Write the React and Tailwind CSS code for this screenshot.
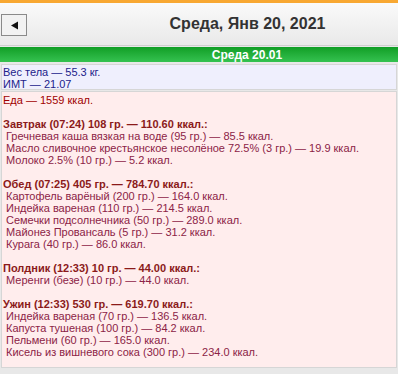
export default function App() {
  const meals = [
    {
      title: 'Завтрак (07:24) 108 гр. — 110.60 ккал.:',
      items: [
        'Гречневая каша вязкая на воде (95 гр.) — 85.5 ккал.',
        'Масло сливочное крестьянское несолёное 72.5% (3 гр.) — 19.9 ккал.',
        'Молоко 2.5% (10 гр.) — 5.2 ккал.',
      ],
    },
    {
      title: 'Обед (07:25) 405 гр. — 784.70 ккал.:',
      items: [
        'Картофель варёный (200 гр.) — 164.0 ккал.',
        'Индейка вареная (110 гр.) — 214.5 ккал.',
        'Семечки подсолнечника (50 гр.) — 289.0 ккал.',
        'Майонез Провансаль (5 гр.) — 31.2 ккал.',
        'Курага (40 гр.) — 86.0 ккал.',
      ],
    },
    {
      title: 'Полдник (12:33) 10 гр. — 44.00 ккал.:',
      items: ['Меренги (безе) (10 гр.) — 44.0 ккал.'],
    },
    {
      title: 'Ужин (12:33) 530 гр. — 619.70 ккал.:',
      items: [
        'Индейка вареная (70 гр.) — 136.5 ккал.',
        'Капуста тушеная (100 гр.) — 84.2 ккал.',
        'Пельмени (60 гр.) — 165.0 ккал.',
        'Кисель из вишневого сока (300 гр.) — 234.0 ккал.',
      ],
    },
  ]

  return (
    <div className="w-[398px] h-[374px] overflow-hidden bg-[#e8e8e8] font-['Liberation_Sans',sans-serif]">
      <div className="h-[3px] bg-[#f8a832]" />

      {/* Header */}
      <div className="h-[43px] flex items-center bg-gradient-to-b from-[#fafafa] to-[#e9e9e9] border-b border-[#cfcfcf]">
        <button className="ml-[1px] mt-[2px] w-[26px] h-[22px] border border-[#8a8a8a] bg-[#f2f2f2] flex items-center justify-center">
          <svg width="9" height="9" viewBox="0 0 9 9">
            <path d="M1 4.5 L8 0.5 L8 8.5 Z" fill="#111" />
          </svg>
        </button>
        <div className="flex-1 text-center pl-[70px] text-[16px] font-bold text-[#333]">
          Среда, Янв 20, 2021
        </div>
      </div>

      {/* Day bar */}
      <div className="mt-[1px] h-[15px] flex items-center justify-center pl-[96px] bg-gradient-to-b from-[#0e9e24] to-[#34c250] text-white text-[12px] font-bold leading-none">
        Среда 20.01
      </div>

      {/* Body stats */}
      <div className="mt-[2px] mx-[1px] h-[26px] border border-[#d6d6d6] bg-[#efeffd] px-[1px] text-[11px] leading-[12px] text-[#22228a] pt-[1px]">
        <div>Вес тела — 55.3 кг.</div>
        <div>ИМТ — 21.07</div>
      </div>

      {/* Food */}
      <div className="mt-[1px] mx-[1px] h-[277px] border border-[#d6d6d6] bg-[#ffeded] px-[1px] pt-[2px] text-[11px] leading-[12px]">
        <div className="text-[#a00000]">Еда — 1559 ккал.</div>
        {meals.map((m) => (
          <div key={m.title} className="mt-[12px]">
            <div className="font-bold text-[#8b1a1a]">{m.title}</div>
            {m.items.map((it) => (
              <div key={it} className="pl-[3px] text-[#8c2346]">
                {it}
              </div>
            ))}
          </div>
        ))}
      </div>
    </div>
  )
}
